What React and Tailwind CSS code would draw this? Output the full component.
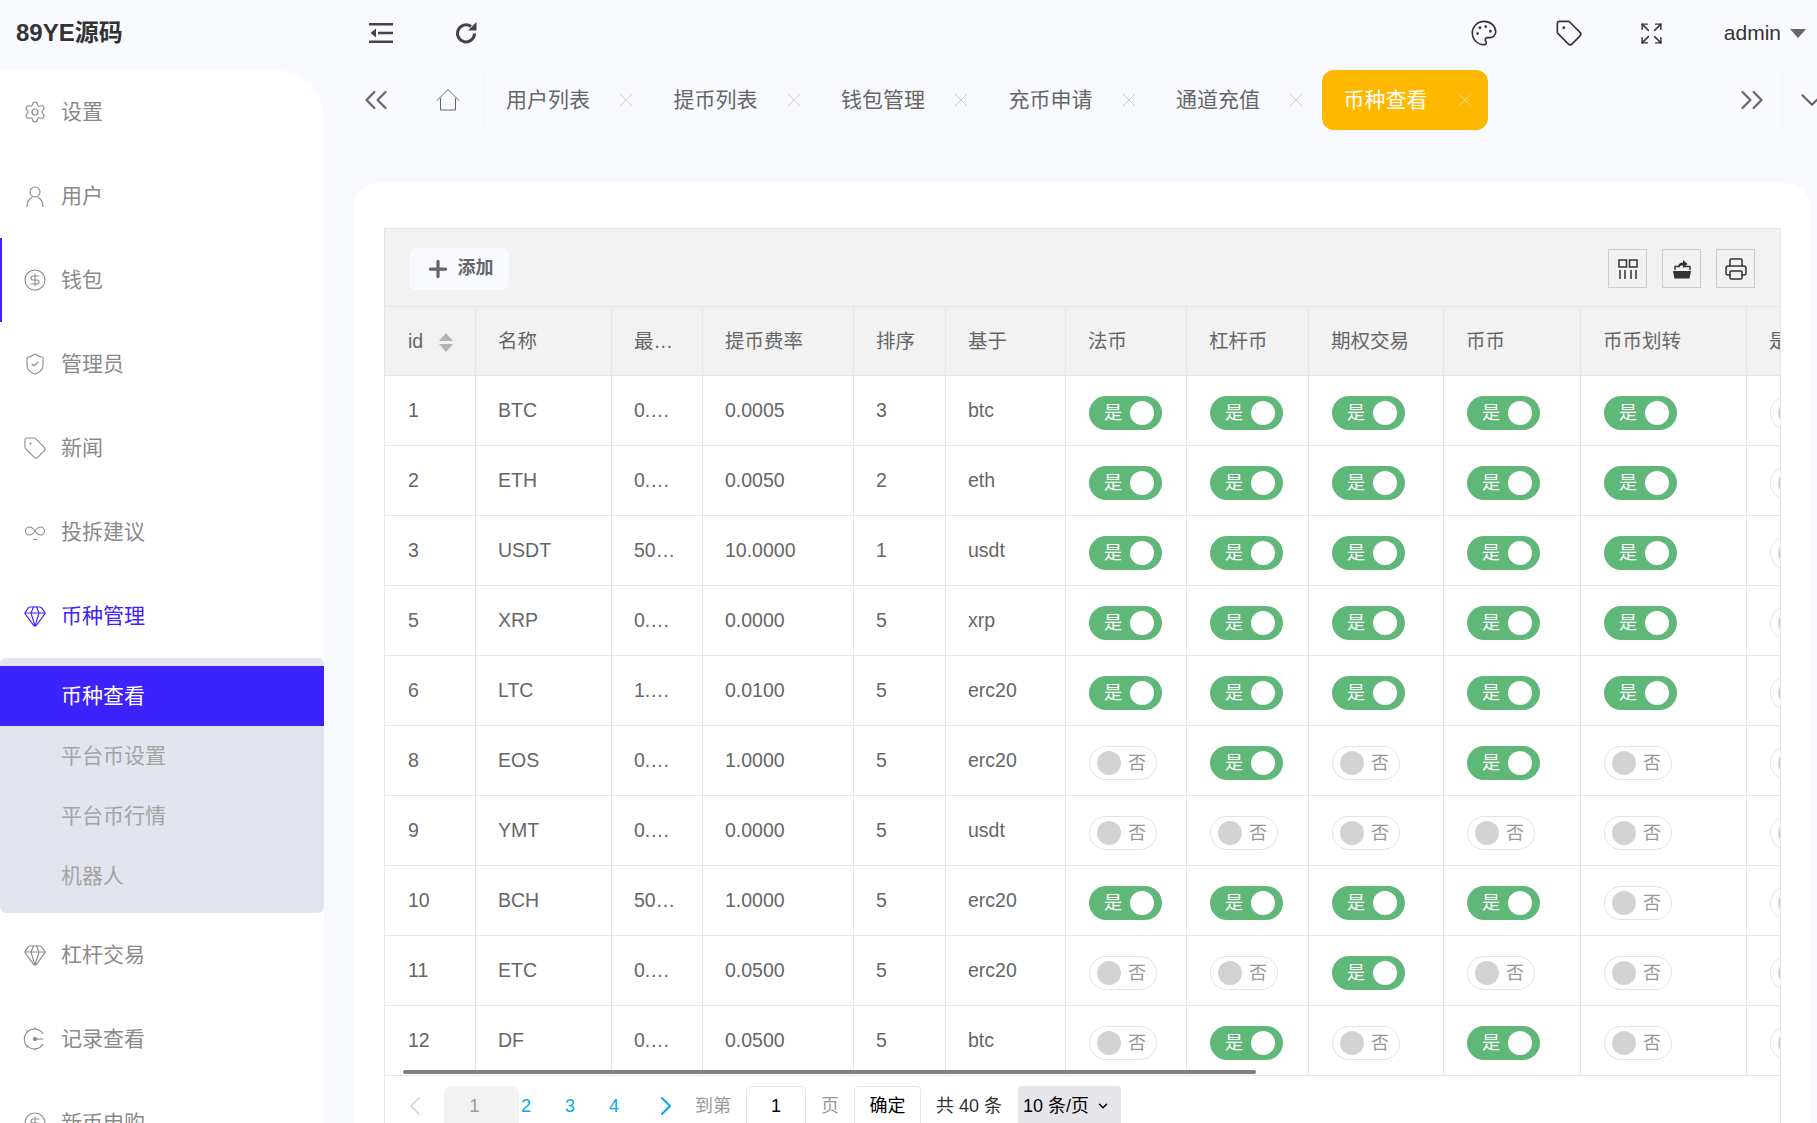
import { Settings, CircleDollarSign, ShieldCheck, Tag, Gem, Palette, Expand, X, ChevronLeft, ChevronRight, ChevronDown, ChevronsLeft, ChevronsRight, Printer, Plus } from 'lucide-react'

const FONT = '[font-family:"Liberation_Sans","Noto_Sans_CJK_SC",sans-serif]'

function UserIcon(props) {
  return (
    <svg viewBox="0 0 24 24" fill="none" stroke="currentColor" strokeWidth="1.3" {...props}>
      <circle cx="12" cy="8" r="5" />
      <path d="M4 23c0-5 2-8 5-9.5M20 23c0-5-2-8-5-9.5" />
    </svg>
  )
}

function LoopIcon(props) {
  return (
    <svg viewBox="0 0 24 24" fill="none" stroke="currentColor" strokeWidth="1.4" {...props}>
      <path d="M12 11c-2-3-3.500-4-5.500-4a4 4 0 0 0 0 8c2 0 3.500-1 5.500-4s3.500-4 5.500-4a4 4 0 0 1 0 8c-2 0-3.500-1-5.500-4Z" />
      <path d="M10 19.500h4" />
    </svg>
  )
}

function DialIcon(props) {
  return (
    <svg viewBox="0 0 24 24" fill="none" stroke="currentColor" strokeWidth="1.3" {...props}>
      <path d="M20 7A10 10 0 1 0 20 17" />
      <path d="M12 12h8" />
      <circle cx="12" cy="12" r="1.500" fill="currentColor" />
      <path d="M12 .5v2M12 21.500v2M3.500 3.500l1.500 1.500M3.500 20.500l1.500-1.500" />
    </svg>
  )
}

function ShrinkIcon(props) {
  return (
    <svg viewBox="0 0 24 20" {...props}>
      <path d="M0 0h24v2.500H0zM0 17.500h24V20H0zM9 8.750h15v2.500H9z" fill="currentColor" />
      <path d="M7 5.500v9L1.500 10z" fill="currentColor" />
    </svg>
  )
}

function RefreshIcon(props) {
  return (
    <svg viewBox="0 0 24 24" fill="none" {...props}>
      <path d="M20.500 12.500A8.500 8.500 0 1 1 17 5.500" stroke="currentColor" strokeWidth="3" />
      <path d="M14 9.500 22.500 9.500 22.500 1z" fill="currentColor" />
    </svg>
  )
}

function HomeIcon(props) {
  return (
    <svg viewBox="0 0 24 24" fill="none" stroke="currentColor" strokeWidth="1" {...props}>
      <path d="M1 12.500 12 1.500l11 11" />
      <path d="M4.500 10v12h15V10" />
    </svg>
  )
}

function ColsIcon(props) {
  return (
    <svg viewBox="0 0 20 20" fill="none" stroke="currentColor" strokeWidth="1.500" {...props}>
      <path d="M1 1h7.500v7H1zM11.500 1H19v7h-7.500z" />
      <path d="M2 11v9M7 11v9M13 11v9M18 11v9" />
    </svg>
  )
}

function ExportIcon(props) {
  return (
    <svg viewBox="0 0 20 20" {...props}>
      <path d="M1 12h18l-1.500 7.500h-15z" fill="currentColor" />
      <path d="M3 11V7.500h5M12 7.500h6V11" fill="none" stroke="currentColor" strokeWidth="1.400" />
      <path d="M6 8c0-3 2-4.500 5-4.500V1l4.500 4L11 9V6.500C9 6.500 7 7 6 8z" fill="currentColor" />
    </svg>
  )
}

const menuTop = [
  { label: '设置', Icon: Settings },
  { label: '用户', Icon: UserIcon },
  { label: '钱包', Icon: CircleDollarSign, bar: true },
  { label: '管理员', Icon: ShieldCheck },
  { label: '新闻', Icon: Tag },
  { label: '投拆建议', Icon: LoopIcon },
]
const subMenu = ['币种查看', '平台币设置', '平台币行情', '机器人']
const menuBottom = [
  { label: '杠杆交易', Icon: Gem },
  { label: '记录查看', Icon: DialIcon },
  { label: '新币申购', Icon: CircleDollarSign },
]

const tabs = ['用户列表', '提币列表', '钱包管理', '充币申请', '通道充值']

const colWidths = ['w-[91px]', 'w-[136px]', 'w-[91px]', 'w-[151px]', 'w-[92px]', 'w-[120px]', 'w-[121px]', 'w-[122px]', 'w-[135px]', 'w-[137px]', 'w-[166px]', 'w-[200px]']
const headers = ['名称', '最…', '提币费率', '排序', '基于', '法币', '杠杆币', '期权交易', '币币', '币币划转', '是']

const rows = [
  { id: 1, name: 'BTC', min: '0.…', fee: '0.0005', sort: 3, base: 'btc', flags: [1, 1, 1, 1, 1] },
  { id: 2, name: 'ETH', min: '0.…', fee: '0.0050', sort: 2, base: 'eth', flags: [1, 1, 1, 1, 1] },
  { id: 3, name: 'USDT', min: '50…', fee: '10.0000', sort: 1, base: 'usdt', flags: [1, 1, 1, 1, 1] },
  { id: 5, name: 'XRP', min: '0.…', fee: '0.0000', sort: 5, base: 'xrp', flags: [1, 1, 1, 1, 1] },
  { id: 6, name: 'LTC', min: '1.…', fee: '0.0100', sort: 5, base: 'erc20', flags: [1, 1, 1, 1, 1] },
  { id: 8, name: 'EOS', min: '0.…', fee: '1.0000', sort: 5, base: 'erc20', flags: [0, 1, 0, 1, 0] },
  { id: 9, name: 'YMT', min: '0.…', fee: '0.0000', sort: 5, base: 'usdt', flags: [0, 0, 0, 0, 0] },
  { id: 10, name: 'BCH', min: '50…', fee: '1.0000', sort: 5, base: 'erc20', flags: [1, 1, 1, 1, 0] },
  { id: 11, name: 'ETC', min: '0.…', fee: '0.0500', sort: 5, base: 'erc20', flags: [0, 0, 1, 0, 0] },
  { id: 12, name: 'DF', min: '0.…', fee: '0.0500', sort: 5, base: 'btc', flags: [0, 1, 0, 1, 0] },
]

function MenuItem({ label, Icon, bar, active }) {
  return (
    <div className={`h-[84px] flex items-center pl-[21px] border-l-2 ${bar ? 'border-[#3c22fb]' : 'border-transparent'} ${active ? 'text-[#3c22fb]' : 'text-[#8a8a8a]'}`}>
      <Icon className="w-[24px] h-[24px] shrink-0" strokeWidth={1.1} />
      <span className="ml-[14px] text-[21px]">{label}</span>
    </div>
  )
}

function Sidebar() {
  return (
    <aside className="w-[324px] shrink-0 bg-white rounded-tr-[50px]">
      {menuTop.map((m) => <MenuItem key={m.label} {...m} />)}
      <MenuItem label="币种管理" Icon={Gem} active />
      <div className="bg-[#e2e5ed] rounded-[6px] pt-2 pb-[7px]">
        {subMenu.map((s, i) => (
          <div key={s} className={`h-[60px] flex items-center pl-[61px] text-[21px] ${i === 0 ? 'bg-[#3c22fb] text-white' : 'text-[#a3a3a3]'}`}>{s}</div>
        ))}
      </div>
      {menuBottom.map((m) => <MenuItem key={m.label} {...m} />)}
    </aside>
  )
}

function TabBar() {
  return (
    <div className="h-[60px] flex items-stretch pl-[22px] text-[21px] text-[#666]">
      <div className="w-[60px] shrink-0 flex items-center justify-center border-r border-[#f3f5fa]">
        <ChevronsLeft className="w-[38px] h-[38px]" strokeWidth={1.4} />
      </div>
      <div className="w-[78px] shrink-0 flex items-center justify-center pl-[6px] border-r border-[#f3f5fa]">
        <HomeIcon className="w-[24px] h-[24px]" />
      </div>
      {tabs.map((t) => (
        <div key={t} className="w-[167.5px] shrink-0 flex items-center pl-[22px]">
          <span className="w-[84px] whitespace-nowrap">{t}</span>
          <X className="ml-[24px] w-[24px] h-[24px] text-[#c2c2c2]" strokeWidth={0.8} />
        </div>
      ))}
      <div className="w-[166px] shrink-0 flex items-center pl-[22px] rounded-[12px] bg-[#ffb800] text-white">
        <span className="w-[84px] whitespace-nowrap">币种查看</span>
        <X className="ml-[25px] w-[24px] h-[24px] text-[#dcdcdc]" strokeWidth={0.8} />
      </div>
      <div className="ml-[234px] w-[60px] shrink-0 flex items-center justify-center border-l border-[#f3f5fa]">
        <ChevronsRight className="w-[38px] h-[38px]" strokeWidth={1.4} />
      </div>
      <div className="w-[60px] shrink-0 flex items-center justify-center border-l border-[#f3f5fa]">
        <ChevronDown className="w-[38px] h-[38px]" strokeWidth={1.4} />
      </div>
    </div>
  )
}

function Toggle({ on }) {
  if (on) {
    return (
      <div className="w-[73px] h-[34px] rounded-full bg-[#5fb878] flex items-center justify-between pl-[15px] pr-[8px] text-[18px] leading-none text-white">
        <span>是</span>
        <span className="w-[24px] h-[24px] rounded-full bg-white" />
      </div>
    )
  }
  return (
    <div className="w-[68px] h-[34px] rounded-full border border-[#e2e2e2] bg-white flex items-center justify-between pl-[7px] pr-[10px] text-[18px] leading-none text-[#999]">
      <span className="w-[24px] h-[24px] rounded-full bg-[#d2d2d2]" />
      <span>否</span>
    </div>
  )
}

function DataTable() {
  const th = 'h-[69px] pt-[2px] pl-[22px] pr-0 font-normal text-left whitespace-nowrap border-r border-b border-[#e6e6e6]'
  const td = 'h-[70px] pl-[22px] pr-0 whitespace-nowrap border-r border-b border-[#e6e6e6]'
  const toggleTd = 'h-[70px] pl-[23px] pr-0 pt-1 border-r border-b border-[#e6e6e6]'
  return (
    <table className="table-fixed border-separate border-spacing-0 w-[1562px] text-[19.5px] text-[#666]">
      <colgroup>
        {colWidths.map((c, i) => <col key={i} className={c} />)}
      </colgroup>
      <thead>
        <tr className="bg-[#f2f2f2]">
          <th className={`${th} pl-[23px]`}>
            <div className="flex items-center">
              <span>id</span>
              <span className="ml-[16px] flex flex-col gap-[3px]">
                <span className="w-0 h-0 border-x-[7px] border-x-transparent border-b-[8px] border-b-[#b2b2b2]" />
                <span className="w-0 h-0 border-x-[7px] border-x-transparent border-t-[8px] border-t-[#b2b2b2]" />
              </span>
            </div>
          </th>
          {headers.map((h) => <th key={h} className={th}>{h}</th>)}
        </tr>
      </thead>
      <tbody>
        {rows.map((r) => (
          <tr key={r.id}>
            <td className={`${td} pl-[23px]`}>{r.id}</td>
            <td className={td}>{r.name}</td>
            <td className={td}>{r.min}</td>
            <td className={td}>{r.fee}</td>
            <td className={td}>{r.sort}</td>
            <td className={td}>{r.base}</td>
            {r.flags.map((f, i) => (
              <td key={i} className={toggleTd}><Toggle on={f === 1} /></td>
            ))}
            <td className={toggleTd}><Toggle on={false} /></td>
          </tr>
        ))}
      </tbody>
    </table>
  )
}

function Pager() {
  return (
    <div className="h-[48px] pt-[10px] flex items-start text-[18px] text-[#999] whitespace-nowrap overflow-hidden">
      <div className="w-[59px] h-[40px] flex items-center justify-center text-[#d2d2d2]">
        <ChevronLeft className="w-[32px] h-[32px]" strokeWidth={1.2} />
      </div>
      <div className="w-[75px] h-[44px] pb-1 pr-[14px] flex items-center justify-center rounded-t-[8px] bg-[#f2f2f2]">1</div>
      <div className="h-[40px] ml-[2px] flex items-center gap-[32px] text-[#01aaed]">
        <span className="w-[12px]">2</span>
        <span className="w-[12px]">3</span>
        <span className="w-[12px]">4</span>
      </div>
      <div className="ml-[29px] h-[40px] flex items-center text-[#01aaed]">
        <ChevronRight className="w-[32px] h-[32px]" strokeWidth={1.5} />
      </div>
      <span className="ml-[13px] h-[40px] leading-[40px]">到第</span>
      <div className="ml-[15px] w-[60px] h-[44px] pb-1 flex items-center justify-center border border-[#e6e6e6] rounded-t-[4px] text-black">1</div>
      <span className="ml-[15px] h-[40px] leading-[40px]">页</span>
      <div className="ml-[15px] w-[67px] h-[44px] pb-1 flex items-center justify-center border border-[#e6e6e6] rounded-t-[4px] text-black">确定</div>
      <span className="ml-[15px] h-[40px] leading-[40px] text-[#333]">共 40 条</span>
      <div className="ml-[16px] w-[103px] h-[44px] pb-1 pl-[5px] flex items-center rounded-t-[4px] bg-[#e6e6ea] text-black">
        10 条/页
        <ChevronDown className="ml-[7px] w-[14px] h-[14px]" strokeWidth={2.5} />
      </div>
    </div>
  )
}

export default function App() {
  return (
    <div className={`w-full h-screen overflow-hidden bg-[#f8faff] ${FONT}`}>
      <header className="h-[70px] pb-1 flex items-center text-[#333]">
        <div className="w-[369px] shrink-0 pl-4 text-[24px] font-bold">89YE源码</div>
        <ShrinkIcon className="w-[24px] h-[20px] text-[#444]" />
        <RefreshIcon className="ml-[61px] w-[24px] h-[24px] text-[#444]" />
        <Palette className="ml-auto w-[28px] h-[28px]" strokeWidth={1.4} />
        <Tag className="ml-[57px] w-[28px] h-[28px]" strokeWidth={1.4} />
        <Expand className="ml-[56px] w-[25px] h-[25px]" strokeWidth={1.4} />
        <span className="ml-[60px] text-[21px]">admin</span>
        <span className="ml-[9px] mr-[11px] w-0 h-0 border-x-[8.500px] border-x-transparent border-t-[9px] border-t-[#666]" />
      </header>
      <div className="flex h-[1053px]">
        <Sidebar />
        <main className="flex-1 min-w-0 overflow-hidden">
          <TabBar />
          <section className="mt-[53px] ml-[30px] mr-[7px] h-[1000px] pt-[45px] pl-[30px] pr-[30px] bg-white rounded-t-[24px]">
            <div className="relative w-[1397px] border-l border-r border-t border-[#e6e6e6] overflow-hidden">
              <div className="h-[78px] pt-[2px] bg-[#f2f2f2] border-b border-[#e6e6e6] flex items-center pl-[23px] pr-[25px]">
                <button className="w-[102px] h-[44px] flex items-center justify-center rounded-[8px] border border-[#edf1f8] bg-[#f8faff] text-[18px] font-bold text-[#666]">
                  <Plus className="w-[26px] h-[26px]" strokeWidth={3} />
                  <span className="ml-[7px]">添加</span>
                </button>
                <div className="ml-auto flex gap-[15px]">
                  <div className="w-[39px] h-[39px] flex items-center justify-center border border-[#ccc] text-[#333]"><ColsIcon className="w-[20px] h-[20px]" /></div>
                  <div className="w-[39px] h-[39px] flex items-center justify-center border border-[#ccc] text-[#333]"><ExportIcon className="w-[20px] h-[20px]" /></div>
                  <div className="w-[39px] h-[39px] flex items-center justify-center border border-[#ccc] text-[#333]"><Printer className="w-[24px] h-[24px]" strokeWidth={1.5} /></div>
                </div>
              </div>
              <DataTable />
              <div className="absolute left-[18px] top-[841px] w-[853px] h-[4px] rounded-full bg-[#808080]" />
              <Pager />
            </div>
          </section>
        </main>
      </div>
    </div>
  )
}
